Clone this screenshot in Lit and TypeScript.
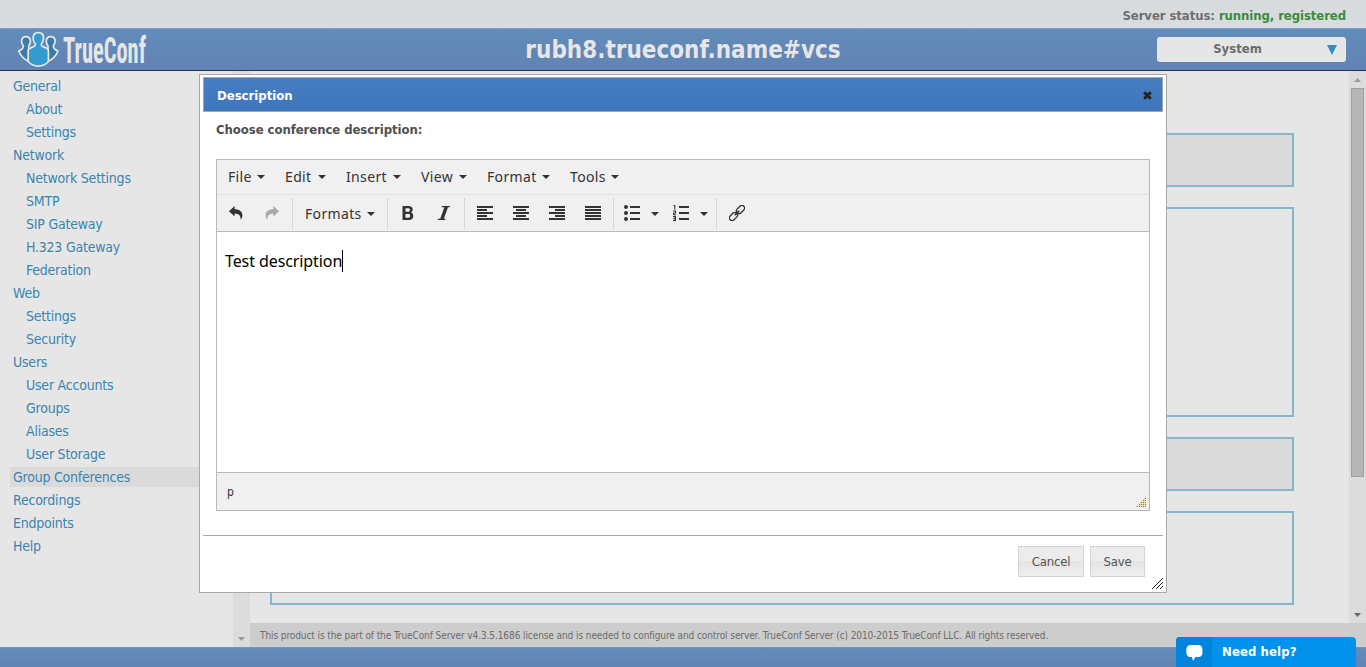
import { LitElement, html, css, svg } from "lit";
import { customElement, property } from "lit/decorators.js";
import { classMap } from "lit/directives/class-map.js";

const NAV: { label: string; sub?: boolean; active?: boolean }[] = [
  { label: "General" },
  { label: "About", sub: true },
  { label: "Settings", sub: true },
  { label: "Network" },
  { label: "Network Settings", sub: true },
  { label: "SMTP", sub: true },
  { label: "SIP Gateway", sub: true },
  { label: "H.323 Gateway", sub: true },
  { label: "Federation", sub: true },
  { label: "Web" },
  { label: "Settings", sub: true },
  { label: "Security", sub: true },
  { label: "Users" },
  { label: "User Accounts", sub: true },
  { label: "Groups", sub: true },
  { label: "Aliases", sub: true },
  { label: "User Storage", sub: true },
  { label: "Group Conferences", active: true },
  { label: "Recordings" },
  { label: "Endpoints" },
  { label: "Help" },
];

const MENUS = [
  { label: "File", width: 37 },
  { label: "Edit", width: 41 },
  { label: "Insert", width: 55 },
  { label: "View", width: 46 },
  { label: "Format", width: 63 },
  { label: "Tools", width: 49 },
];

const caret = html`<svg class="caret" width="8" height="4" viewBox="0 0 8 4"><path d="M0 0h8L4 4z" fill="#333" /></svg>`;

/** Sixteen-pixel glyph made of horizontal bars: [x, y, width]. */
const bars = (rows: number[][]) =>
  html`<svg width="16" height="16" viewBox="0 0 16 16" fill="#333" shape-rendering="crispEdges">
    ${rows.map(([x, y, w]) => svg`<rect x=${x} y=${y} width=${w} height="2"/>`)}
  </svg>`;

const ICONS = {
  undo: html`<svg width="16" height="16" viewBox="0 0 16 16"><path d="M1 6.2 6.6 1v3.200c5 0 7.800 2.600 7.800 6 0 1.700-.6 3.200-1.900 4.600.6-4-1.400-6.300-5.900-6.400v3.200z" fill="#333" /></svg>`,
  redo: html`<svg width="16" height="16" viewBox="0 0 16 16"><path d="M15 6.200 9.400 1v3.200c-5 0-7.800 2.600-7.800 6 0 1.700.6 3.200 1.900 4.600-.6-4 1.400-6.300 5.900-6.400v3.200z" fill="#a8a8a8" /></svg>`,
  bold: html`<svg width="16" height="16" viewBox="0 0 16 16"><path fill="#333" fill-rule="evenodd" d="M2.500 1h6c2.600 0 4.200 1.300 4.200 3.600 0 1.400-.6 2.400-1.700 3 1.500.5 2.300 1.700 2.300 3.400 0 2.500-1.700 4-4.500 4H2.500zM5.500 3.200v3.500H8c1.200 0 1.900-.6 1.900-1.800S9.200 3.200 8 3.200zM5.500 8.900v3.900h2.700c1.300 0 2-.7 2-2s-.7-1.900-2-1.900z" /></svg>`,
  italic: html`<svg width="16" height="16" viewBox="0 0 16 16"><path fill="#333" d="M6 1h8l-.3 1.200h-1.700L7.800 13.800h1.800l-.3 1.200H1.700l.3-1.200h2.200L8.400 2.200H5.700z" /></svg>`,
  left: bars([[0, 1, 16], [0, 4, 10], [0, 7, 16], [0, 10, 10], [0, 13, 16]]),
  center: bars([[0, 1, 16], [3, 4, 10], [0, 7, 16], [3, 10, 10], [0, 13, 16]]),
  right: bars([[0, 1, 16], [6, 4, 10], [0, 7, 16], [6, 10, 10], [0, 13, 16]]),
  full: bars([[0, 1, 16], [0, 4, 16], [0, 7, 16], [0, 10, 16], [0, 13, 16]]),
  bullets: html`<svg width="16" height="16" viewBox="0 0 16 16" fill="#333">
    <circle cx="2" cy="2" r="2" /><circle cx="2" cy="8" r="2" /><circle cx="2" cy="14" r="2" />
    <path d="M6 1h10v2H6zM6 7h10v2H6zM6 13h10v2H6z" />
  </svg>`,
  numbers: html`<svg width="16" height="16" viewBox="0 0 16 16" fill="none" stroke="#333">
    <path d="M6 2h10M6 8h10M6 14h10" stroke-width="2" />
    <path d="M.5.500H1.800V4.500M0 6H2.500V8H.6V9.800H3M0 11.500H2.500V15.400H0M.4 13.400H2.500" stroke-width="1.100" />
  </svg>`,
  link: html`<svg width="16" height="16" viewBox="0 0 16 16" fill="none" stroke="#333" stroke-width="1.300">
    <g transform="rotate(-45 8 8)">
      <rect x="-1.600" y="5.300" width="9.200" height="5.400" rx="2.700" />
      <rect x="8.400" y="5.300" width="9.200" height="5.400" rx="2.700" />
      <path d="M5 8h6" stroke-width="1.600" />
    </g>
  </svg>`,
};

@customElement("tc-scrollbar")
class TcScrollbar extends LitElement {
  @property({ type: Boolean }) thumb = false;
  static styles = css`
    :host { display: flex; flex-direction: column; align-items: center; width: 17px; flex: none; background: #dcdcdc; box-sizing: border-box; padding: 7px 0 6px; }
    .thumb { width: 11px; height: 387px; margin-top: 6px; border: 1px solid #a0a0a0; background: #b6b6b6; }
    .fill { flex: 1; }
    svg { display: block; flex: none; }
  `;
  render() {
    return html`
      <svg width="7" height="4" viewBox="0 0 7 4"><path d="M0 4h7L3.500 0z" fill="#9a9a9a" /></svg>
      ${this.thumb ? html`<div class="thumb"></div>` : null}
      <div class="fill"></div>
      <svg width="7" height="4" viewBox="0 0 7 4"><path d="M0 0h7L3.500 4z" fill=${this.thumb ? "#666" : "#9a9a9a"} /></svg>
    `;
  }
}

@customElement("tc-nav")
class TcNav extends LitElement {
  static styles = css`
    :host { display: flex; flex-direction: column; gap: 3px; padding: 5px 0 0 10px; width: 223px; flex: none; }
    .item { height: 20px; line-height: 20px; padding-left: 3px; font-size: 14px; letter-spacing: -0.22px; color: #3a84b1; white-space: nowrap; }
    .sub { padding-left: 16px; }
    .active { background: #dadada; }
  `;
  render() {
    return NAV.map((n) => html`<div class=${classMap({ item: true, sub: !!n.sub, active: !!n.active })}>${n.label}</div>`);
  }
}

@customElement("tc-editor")
class TcEditor extends LitElement {
  static styles = css`
    :host { display: block; box-sizing: border-box; height: 352px; border: 1px solid #b9b9b9; background: #fff; color: #333; }
    svg { display: block; flex: none; }
    .menubar { display: flex; gap: 20px; height: 34px; padding-left: 11px; background: #f0f0f0; border-bottom: 1px solid #e2e2e2; font-family: "Noto Sans", sans-serif; font-size: 14px; letter-spacing: 0.35px; }
    .menu { display: flex; align-items: center; justify-content: space-between; white-space: nowrap; }
    .menu span { padding-bottom: 2px; }
    .toolbar { display: flex; align-items: center; height: 36px; background: #f0f0f0; border-bottom: 1px solid #b9b9b9; font-family: "Noto Sans", sans-serif; font-size: 14px; letter-spacing: 0.35px; }
    .group { display: flex; align-items: center; height: 31px; box-sizing: content-box; border-right: 1px solid #d6d6d6; }
    .btn { display: flex; justify-content: center; width: 36px; }
    .history { padding: 0 2px 0 1px; }
    .formats { width: 70px; padding: 0 12px; justify-content: space-between; }
    .pair { padding: 0 2px; }
    .lists { width: 84px; padding: 0 8px 0 10px; }
    .toolbar .caret { margin-top: 2px; }
    .lists .caret { margin: 2px 14px 0 11px; }
    .lists .caret:last-child { margin-right: 0; }
    .link { padding-left: 12px; }
    .content { display: flex; align-items: flex-start; height: 222px; padding: 18px 8px 0; color: #000; font-family: "Noto Sans", sans-serif; font-size: 16px; letter-spacing: -0.09px; line-height: 22px; white-space: nowrap; }
    .cursor { width: 1px; height: 22px; background: #000; }
    .status { display: flex; justify-content: space-between; height: 37px; border-top: 1px solid #b9b9b9; background: #f0f0f0; font-size: 12px; line-height: 38px; padding-left: 10px; }
    .grip { align-self: flex-end; margin: 0 2px 2px 0; }
  `;
  render() {
    const dots = [];
    for (let r = 0; r < 5; r++) for (let c = 4 - r; c < 5; c++) dots.push([c * 2, r * 2]);
    return html`
      <div class="menubar">${MENUS.map((m) => html`<div class="menu" style="width:${m.width}px"><span>${m.label}</span>${caret}</div>`)}</div>
      <div class="toolbar">
        <div class="group history"><div class="btn">${ICONS.undo}</div><div class="btn">${ICONS.redo}</div></div>
        <div class="group formats"><span>Formats</span>${caret}</div>
        <div class="group pair"><div class="btn">${ICONS.bold}</div><div class="btn">${ICONS.italic}</div></div>
        <div class="group pair">
          <div class="btn">${ICONS.left}</div><div class="btn">${ICONS.center}</div>
          <div class="btn">${ICONS.right}</div><div class="btn">${ICONS.full}</div>
        </div>
        <div class="group lists">${ICONS.bullets}${caret}${ICONS.numbers}${caret}</div>
        <div class="link">${ICONS.link}</div>
      </div>
      <div class="content"><span>Test description</span><i class="cursor"></i></div>
      <div class="status"><span>p</span>
        <svg class="grip" width="11" height="11" viewBox="0 0 11 11" shape-rendering="crispEdges">
          ${dots.map(([x, y]) => svg`<rect x=${x} y=${y} width="2" height="2" fill="#ebe5bd"/><rect x=${x + 1} y=${y + 1} width="1" height="1" fill="#777"/>`)}
        </svg>
      </div>
    `;
  }
}

@customElement("tc-dialog")
class TcDialog extends LitElement {
  static styles = css`
    :host { display: flex; flex-direction: column; box-sizing: border-box; width: 968px; height: 519px; border: 1px solid #a8a8a8; background: #fff; padding: 2px 3px 3px; }
    .title { display: flex; align-items: center; justify-content: space-between; box-sizing: border-box; height: 35px; padding: 2px 9px 0 13px; border: 1px solid #a2a7ad; background: linear-gradient(#467dc3, #4076bb); color: #fff; font-weight: bold; font-size: 13px; }
    .body { flex: 1; padding: 0 13px; }
    .label { height: 47px; line-height: 36px; font-size: 13px; letter-spacing: -0.06px; font-weight: bold; color: #4f4f4f; }
    .actions { display: flex; justify-content: flex-end; gap: 6px; height: 43px; padding: 10px 18px 0 0; border-top: 1px solid #a8a8a8; color: #555; }
    .button { box-sizing: border-box; height: 31px; width: 66px; border: 1px solid #d3d3d3; background: linear-gradient(#ececec 0 50%, #e4e4e4 50%, #efefef); font-size: 13px; line-height: 30px; text-align: center; letter-spacing: -0.2px; }
    .save { width: 55px; }
    .resize { position: absolute; right: 3px; bottom: 3px; display: block; }
  `;
  render() {
    return html`
      <div class="title"><span>Description</span>
        <svg width="11" height="11" viewBox="0 0 11 11"><path d="M2.200 2.200 8.800 8.800M8.800 2.200 2.200 8.800" stroke="#222" stroke-width="3" /></svg>
      </div>
      <div class="body"><div class="label">Choose conference description:</div><tc-editor></tc-editor></div>
      <div class="actions"><div class="button">Cancel</div><div class="button save">Save</div></div>
      <svg class="resize" width="11" height="11" viewBox="0 0 11 11" stroke="#222" stroke-width="1"><path d="M0 11 11 0M4 11l7-7M8 11l3-3" /></svg>
    `;
  }
}

@customElement("app-root")
class AppRoot extends LitElement {
  static styles = css`
    :host { display: flex; flex-direction: column; position: relative; width: 1366px; height: 667px; overflow: hidden; background: #e6e6e6; font-family: "DejaVu Sans Condensed", "DejaVu Sans", sans-serif; font-stretch: condensed; }
    .top { position: relative; display: flex; justify-content: flex-end; height: 28px; padding-right: 20px; background: #d9dde0; font-size: 13px; font-weight: bold; letter-spacing: -0.08px; line-height: 31px; color: #6c6c6c; white-space: pre; }
    .grain { position: absolute; inset: 0; opacity: 0.07; }
    .ok { color: #348b34; }
    .header { display: grid; grid-template-columns: 400px 1fr 400px; align-items: center; box-sizing: border-box; height: 43px; border-top: 1px solid #7b9cc6; border-bottom: 1px solid #33313b; background: linear-gradient(#628cba, #6183b3); }
    .logo { display: block; margin-left: 16px; overflow: visible; }
    .name { text-align: center; color: #e6e6e6; font-size: 24px; font-weight: bold; white-space: nowrap; }
    .system { display: flex; align-items: center; align-self: start; justify-self: end; box-sizing: border-box; width: 189px; height: 25px; margin: 8px 20px 0 0; padding: 0 9px 0 0; border-radius: 3px; background: #e6e6e6; color: #6c6c6c; font-size: 13px; font-weight: bold; line-height: 16px; }
    .system span { flex: 1; text-align: center; padding: 0 9px 1px 0; }
    .middle { display: flex; height: 576px; }
    .right { display: flex; flex-direction: column; flex: 1; }
    .scroll { display: flex; height: 552px; }
    .main { flex: 1; display: flex; flex-direction: column; gap: 20px; padding: 62px 55px 0 20px; }
    .box { box-sizing: border-box; border: 2px solid #84b6cf; }
    .short { height: 54px; background: #dadada; }
    .tall { height: 210px; }
    .mid { height: 94px; }
    .foot { height: 24px; padding-left: 10px; background: #cdcdcd; color: #6b6b6b; font-size: 10px; letter-spacing: -0.09px; line-height: 25px; white-space: nowrap; }
    .bottom { flex: 1; border-top: 1px solid #7b93b9; background: linear-gradient(#628cba, #6184b4); }
    .dialog { position: absolute; left: 199px; top: 74px; }
    .help { position: absolute; right: 10px; bottom: 0; display: flex; width: 180px; height: 30px; border-radius: 4px 4px 0 0; overflow: hidden; background: #0292ec; color: #fff; font-size: 13px; font-weight: bold; line-height: 29px; letter-spacing: 0.1px; }
    .chat { display: flex; align-items: center; justify-content: center; box-sizing: border-box; width: 36px; padding-top: 2px; margin-right: 10px; background: #0284dc; }
  `;
  render() {
    return html`
      <div class="top">
        <svg class="grain" width="1366" height="28"><filter id="n"><feTurbulence type="fractalNoise" baseFrequency="0.6" numOctaves="2" /><feColorMatrix type="saturate" values="0" /></filter><rect width="1366" height="28" filter="url(#n)" /></svg>
        <span>Server status: </span><span class="ok">running, registered</span>
      </div>
      <div class="header">
        <svg class="logo" width="140" height="41" viewBox="16 29 140 41">
          <g stroke="#e6e6e6" stroke-width="1.700" stroke-linejoin="round">
            <path fill="#3a7ca5" d="M26 36.600c2.900 0 4.400 1.900 4.400 4.700 0 2-.7 3.500-1.700 4.700V61.500c-4.500-2.200-8.200-6-10-10.500 3-1.200 4.700-2.500 4.700-5-1.100-1.200-1.800-2.700-1.800-4.700 0-2.800 1.500-4.700 4.400-4.700z" />
            <path fill="#3a7ca5" d="M50.700 36.600c2.900 0 4.400 1.900 4.400 4.700 0 2-.7 3.500-1.800 4.700 0 2.500 1.700 3.800 4.700 5-1.800 4.500-5.500 8.300-10 10.500V46c-1-1.200-1.700-2.700-1.700-4.700 0-2.800 1.500-4.700 4.400-4.700z" />
            <path fill="#349bce" d="M38.300 32.700c3.400 0 5.200 2.200 5.200 5.400 0 2.500-.8 4.300-2.100 5.700v1.400c0 2 7 2 7 5.300v11c-5.500 6.100-14.700 6.100-20.200 0v-11c0-3.300 7-3.300 7-5.300v-1.400c-1.300-1.400-2.100-3.200-2.100-5.700 0-3.200 1.800-5.400 5.200-5.400z" />
          </g>
          <text x="63" y="62.800" font-family="Roboto, sans-serif" font-weight="bold" font-size="37" fill="#e6e6e6" textLength="83" lengthAdjust="spacingAndGlyphs">TrueConf</text>
        </svg>
        <div class="name">rubh8.trueconf.name#vcs</div>
        <div class="system"><span>System</span><svg width="10" height="10" viewBox="0 0 10 10"><path d="M0 0h10L5 10z" fill="#348cba" /></svg></div>
      </div>
      <div class="middle">
        <tc-nav></tc-nav>
        <tc-scrollbar></tc-scrollbar>
        <div class="right">
          <div class="scroll">
            <div class="main">
              <div class="box short"></div><div class="box tall"></div><div class="box short"></div><div class="box mid"></div>
            </div>
            <tc-scrollbar thumb></tc-scrollbar>
          </div>
          <div class="foot">This product is the part of the TrueConf Server v4.3.5.1686 license and is needed to configure and control server. TrueConf Server (c) 2010-2015 TrueConf LLC. All rights reserved.</div>
        </div>
      </div>
      <div class="bottom"></div>
      <tc-dialog class="dialog"></tc-dialog>
      <div class="help">
        <div class="chat"><svg width="17" height="16" viewBox="0 0 17 16"><path d="M5 0h7c3.500 0 4.500 2 4.500 6s-1 6-4.500 6H9.500L7 16 6 12H5C1.500 12 .3 10 .3 6S1.500 0 5 0z" fill="#fff" /></svg></div>
        <span>Need help?</span>
      </div>
    `;
  }
}
